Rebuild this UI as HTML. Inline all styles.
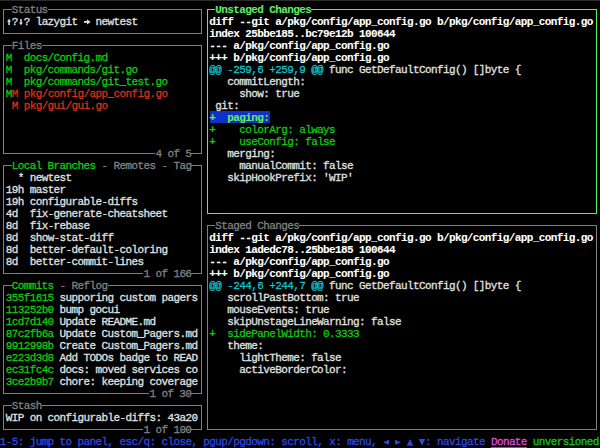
<!DOCTYPE html>
<html><head><meta charset="utf-8"><style>
html,body{margin:0;padding:0;background:#000000;}
#s{position:relative;width:600px;height:448px;overflow:hidden;background:#000000;}
.l{position:absolute;}
.t{position:absolute;font-family:"Liberation Mono",monospace;font-size:11px;letter-spacing:-0.611px;line-height:12px;height:12px;white-space:pre;-webkit-text-stroke-width:0.3px;}
#topbar{position:absolute;left:0;top:0;width:600px;height:1px;background:#2b2b2b;}
</style></head><body><div id="s">
<div id="topbar"></div>

<div class="l" style="left:3px;top:9px;width:199px;height:1px;background:#808080"></div>
<div class="l" style="left:3px;top:33px;width:199px;height:1px;background:#808080"></div>
<div class="l" style="left:3px;top:9px;width:1px;height:25px;background:#808080"></div>
<div class="l" style="left:201px;top:9px;width:1px;height:25px;background:#808080"></div>
<svg class="l" style="left:0;top:0" width="100" height="30"><rect x="84" y="21" width="4" height="1.8" fill="#e0e0e0"/><polygon points="87,19.2 90.6,21.9 87,24.6" fill="#e0e0e0"/><g fill="#e0e0e0"><rect x="8.3" y="20.8" width="1.5" height="4.2"/><polygon points="9.05,18.8 11,21.8 7.1,21.8"/><rect x="20.2" y="19" width="1.5" height="4.2"/><polygon points="19,22.4 22.9,22.4 20.95,25.2"/></g></svg>
<div class="l" style="left:3px;top:45px;width:199px;height:1px;background:#808080"></div>
<div class="l" style="left:3px;top:153px;width:199px;height:1px;background:#808080"></div>
<div class="l" style="left:3px;top:45px;width:1px;height:109px;background:#808080"></div>
<div class="l" style="left:201px;top:45px;width:1px;height:109px;background:#808080"></div>
<div class="l" style="left:3px;top:165px;width:199px;height:1px;background:#808080"></div>
<div class="l" style="left:3px;top:273px;width:199px;height:1px;background:#808080"></div>
<div class="l" style="left:3px;top:165px;width:1px;height:109px;background:#808080"></div>
<div class="l" style="left:201px;top:165px;width:1px;height:109px;background:#808080"></div>
<div class="l" style="left:3px;top:285px;width:199px;height:1px;background:#808080"></div>
<div class="l" style="left:3px;top:393px;width:199px;height:1px;background:#808080"></div>
<div class="l" style="left:3px;top:285px;width:1px;height:109px;background:#808080"></div>
<div class="l" style="left:201px;top:285px;width:1px;height:109px;background:#808080"></div>
<div class="l" style="left:3px;top:405px;width:199px;height:1px;background:#808080"></div>
<div class="l" style="left:3px;top:429px;width:199px;height:1px;background:#808080"></div>
<div class="l" style="left:3px;top:405px;width:1px;height:25px;background:#808080"></div>
<div class="l" style="left:201px;top:405px;width:1px;height:25px;background:#808080"></div>
<div class="l" style="left:207px;top:9px;width:390px;height:1px;background:#5aee60"></div>
<div class="l" style="left:207px;top:213px;width:390px;height:1px;background:#5aee60"></div>
<div class="l" style="left:207px;top:9px;width:1px;height:205px;background:#5aee60"></div>
<div class="l" style="left:596px;top:9px;width:1px;height:205px;background:#5aee60"></div>
<div class="l" style="left:210px;top:111px;width:60px;height:12px;background:#1030c8"></div>
<div class="l" style="left:207px;top:225px;width:390px;height:1px;background:#808080"></div>
<div class="l" style="left:207px;top:429px;width:390px;height:1px;background:#808080"></div>
<div class="l" style="left:207px;top:225px;width:1px;height:205px;background:#808080"></div>
<div class="l" style="left:596px;top:225px;width:1px;height:205px;background:#808080"></div>
<svg class="l" style="left:0;top:0" width="600" height="448"><g fill="#2c48e4"><polygon points="383,442.3 389,439.8 389,444.8"/><polygon points="395,439.8 401,442.3 395,444.8"/><polygon points="410,439 413.2,445.8 406.8,445.8"/><polygon points="418.8,439 425.2,439 422,445.8"/></g></svg>
<div class="l" style="left:491px;top:447px;width:36px;height:1px;background:#a040b0"></div>
<div class="t" style="left:11.68px;top:4px"><span style="color:#808080;background:#000">Status</span></div>
<div class="t" style="left:5.69px;top:16px"><span style="color:#e0e0e0"> ? ? lazygit   newtest</span></div>
<div class="t" style="left:11.68px;top:40px"><span style="color:#808080;background:#000">Files</span></div>
<div class="t" style="left:5.69px;top:52px"><span style="color:#10c810">M  docs/Config.md</span></div>
<div class="t" style="left:5.69px;top:64px"><span style="color:#10c810">M  pkg/commands/git.go</span></div>
<div class="t" style="left:5.69px;top:76px"><span style="color:#10c810">M  pkg/commands/git_test.go</span></div>
<div class="t" style="left:5.69px;top:88px"><span style="color:#10c810">M</span><span style="color:#d83018">M pkg/config/app_config.go</span></div>
<div class="t" style="left:5.69px;top:100px"><span style="color:#d83018"> M pkg/gui/gui.go</span></div>
<div class="t" style="left:155.41px;top:148px"><span style="color:#808080;background:#000">4 of 5</span></div>
<div class="t" style="left:11.68px;top:160px"><span style="color:#10c810;background:#000">Local Branches</span><span style="color:#808080;background:#000"> - Remotes - Tag</span></div>
<div class="t" style="left:5.69px;top:172px"><span style="color:#e0e0e0">  * </span><span style="color:#e0e0e0">newtest</span></div>
<div class="t" style="left:5.69px;top:184px"><span style="color:#e0e0e0">19h </span><span style="color:#e0e0e0">master</span></div>
<div class="t" style="left:5.69px;top:196px"><span style="color:#e0e0e0">19h </span><span style="color:#e0e0e0">configurable-diffs</span></div>
<div class="t" style="left:5.69px;top:208px"><span style="color:#e0e0e0">4d  </span><span style="color:#e0e0e0">fix-generate-cheatsheet</span></div>
<div class="t" style="left:5.69px;top:220px"><span style="color:#e0e0e0">8d  </span><span style="color:#e0e0e0">fix-rebase</span></div>
<div class="t" style="left:5.69px;top:232px"><span style="color:#e0e0e0">8d  </span><span style="color:#e0e0e0">show-stat-diff</span></div>
<div class="t" style="left:5.69px;top:244px"><span style="color:#e0e0e0">8d  </span><span style="color:#e0e0e0">better-default-coloring</span></div>
<div class="t" style="left:5.69px;top:256px"><span style="color:#e0e0e0">8d  </span><span style="color:#e0e0e0">better-commit-lines</span></div>
<div class="t" style="left:143.44px;top:268px"><span style="color:#808080;background:#000">1 of 166</span></div>
<div class="t" style="left:11.68px;top:280px"><span style="color:#10c810;background:#000">Commits</span><span style="color:#808080;background:#000"> - Reflog</span></div>
<div class="t" style="left:5.69px;top:292px"><span style="color:#10c810">355f1615</span> <span style="color:#e0e0e0">supporing custom pagers</span></div>
<div class="t" style="left:5.69px;top:304px"><span style="color:#10c810">113252b0</span> <span style="color:#e0e0e0">bump gocui</span></div>
<div class="t" style="left:5.69px;top:316px"><span style="color:#10c810">1cd7d140</span> <span style="color:#e0e0e0">Update README.md</span></div>
<div class="t" style="left:5.69px;top:328px"><span style="color:#10c810">87c2fb6a</span> <span style="color:#e0e0e0">Update Custom_Pagers.md</span></div>
<div class="t" style="left:5.69px;top:340px"><span style="color:#10c810">9912998b</span> <span style="color:#e0e0e0">Create Custom_Pagers.md</span></div>
<div class="t" style="left:5.69px;top:352px"><span style="color:#10c810">e223d3d8</span> <span style="color:#e0e0e0">Add TODOs badge to READ</span></div>
<div class="t" style="left:5.69px;top:364px"><span style="color:#10c810">ec31fc4c</span> <span style="color:#e0e0e0">docs: moved services co</span></div>
<div class="t" style="left:5.69px;top:376px"><span style="color:#10c810">3ce2b9b7</span> <span style="color:#e0e0e0">chore: keeping coverage</span></div>
<div class="t" style="left:149.42px;top:388px"><span style="color:#808080;background:#000">1 of 30</span></div>
<div class="t" style="left:11.68px;top:400px"><span style="color:#808080;background:#000">Stash</span></div>
<div class="t" style="left:5.69px;top:412px"><span style="color:#e0e0e0">WIP on configurable-diffs: 43a20</span></div>
<div class="t" style="left:143.44px;top:424px"><span style="color:#808080;background:#000">1 of 100</span></div>
<div class="t" style="left:215.30px;top:4px"><span style="color:#5aee60;font-weight:bold;-webkit-text-stroke-width:0.1px;background:#000">Unstaged Changes</span></div>
<div class="t" style="left:209.31px;top:16px"><span style="color:#ffffff;font-weight:bold;-webkit-text-stroke-width:0.1px">diff --git a/pkg/config/app_config.go b/pkg/config/app_config.go</span></div>
<div class="t" style="left:209.31px;top:28px"><span style="color:#ffffff;font-weight:bold;-webkit-text-stroke-width:0.1px">index 25bbe185..bc79e12b 100644</span></div>
<div class="t" style="left:209.31px;top:40px"><span style="color:#ffffff;font-weight:bold;-webkit-text-stroke-width:0.1px">--- a/pkg/config/app_config.go</span></div>
<div class="t" style="left:209.31px;top:52px"><span style="color:#ffffff;font-weight:bold;-webkit-text-stroke-width:0.1px">+++ b/pkg/config/app_config.go</span></div>
<div class="t" style="left:209.31px;top:64px"><span style="color:#10c4c8">@@ -259,6 +259,9 @@</span><span style="color:#e0e0e0"> func GetDefaultConfig() []byte {</span></div>
<div class="t" style="left:209.31px;top:76px"><span style="color:#e0e0e0">   commitLength:</span></div>
<div class="t" style="left:209.31px;top:88px"><span style="color:#e0e0e0">     show: true</span></div>
<div class="t" style="left:209.31px;top:100px"><span style="color:#e0e0e0"> git:</span></div>
<div class="t" style="left:209.31px;top:112px"><span style="color:#5aee60;font-weight:bold;-webkit-text-stroke-width:0.1px">+  paging:</span></div>
<div class="t" style="left:209.31px;top:124px"><span style="color:#10c810;font-weight:bold;-webkit-text-stroke-width:0.1px">+</span><span style="color:#10c810">    colorArg: always</span></div>
<div class="t" style="left:209.31px;top:136px"><span style="color:#10c810;font-weight:bold;-webkit-text-stroke-width:0.1px">+</span><span style="color:#10c810">    useConfig: false</span></div>
<div class="t" style="left:209.31px;top:148px"><span style="color:#e0e0e0">   merging:</span></div>
<div class="t" style="left:209.31px;top:160px"><span style="color:#e0e0e0">     manualCommit: false</span></div>
<div class="t" style="left:209.31px;top:172px"><span style="color:#e0e0e0">   skipHookPrefix: 'WIP'</span></div>
<div class="t" style="left:215.30px;top:220px"><span style="color:#808080;background:#000">Staged Changes</span></div>
<div class="t" style="left:209.31px;top:232px"><span style="color:#ffffff;font-weight:bold;-webkit-text-stroke-width:0.1px">diff --git a/pkg/config/app_config.go b/pkg/config/app_config.go</span></div>
<div class="t" style="left:209.31px;top:244px"><span style="color:#ffffff;font-weight:bold;-webkit-text-stroke-width:0.1px">index 1adedc78..25bbe185 100644</span></div>
<div class="t" style="left:209.31px;top:256px"><span style="color:#ffffff;font-weight:bold;-webkit-text-stroke-width:0.1px">--- a/pkg/config/app_config.go</span></div>
<div class="t" style="left:209.31px;top:268px"><span style="color:#ffffff;font-weight:bold;-webkit-text-stroke-width:0.1px">+++ b/pkg/config/app_config.go</span></div>
<div class="t" style="left:209.31px;top:280px"><span style="color:#10c4c8">@@ -244,6 +244,7 @@</span><span style="color:#e0e0e0"> func GetDefaultConfig() []byte {</span></div>
<div class="t" style="left:209.31px;top:292px"><span style="color:#e0e0e0">   scrollPastBottom: true</span></div>
<div class="t" style="left:209.31px;top:304px"><span style="color:#e0e0e0">   mouseEvents: true</span></div>
<div class="t" style="left:209.31px;top:316px"><span style="color:#e0e0e0">   skipUnstageLineWarning: false</span></div>
<div class="t" style="left:209.31px;top:328px"><span style="color:#10c810;font-weight:bold;-webkit-text-stroke-width:0.1px">+</span><span style="color:#10c810">  sidePanelWidth: 0.3333</span></div>
<div class="t" style="left:209.31px;top:340px"><span style="color:#e0e0e0">   theme:</span></div>
<div class="t" style="left:209.31px;top:352px"><span style="color:#e0e0e0">     lightTheme: false</span></div>
<div class="t" style="left:209.31px;top:364px"><span style="color:#e0e0e0">     activeBorderColor:</span></div>
<div class="t" style="left:-0.30px;top:436px"><span style="color:#2c48e4">1-5: jump to panel, esc/q: close, pgup/pgdown: scroll, x: menu,        : navigate</span> <span style="color:#e048e0">Donate</span> <span style="color:#10c810">unversioned</span></div>
</div></body></html>
